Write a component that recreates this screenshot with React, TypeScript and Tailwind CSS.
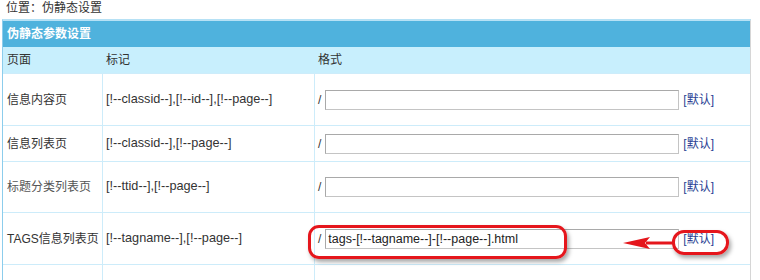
import React from "react";

type Row = {
  page: string;
  marks: string;
  value: string;
  height: string;
  muted?: boolean;
};

const rows: Row[] = [
  { page: "信息内容页", marks: "[!--classid--],[!--id--],[!--page--]", value: "", height: "h-[52px]" },
  { page: "信息列表页", marks: "[!--classid--],[!--page--]", value: "", height: "h-[36px]" },
  { page: "标题分类列表页", marks: "[!--ttid--],[!--page--]", value: "", height: "h-[51px]", muted: true },
  { page: "TAGS信息列表页", marks: "[!--tagname--],[!--page--]", value: "tags-[!--tagname--]-[!--page--].html", height: "h-[52px]" },
  { page: "", marks: "", value: "", height: "h-[20px]" },
];

function FormatCell({ value, empty }: { value: string; empty: boolean }) {
  if (empty) return <div />;
  return (
    <div className="flex items-center pl-[3px]">
      <span className="text-[#333]">/</span>
      <input
        readOnly
        value={value}
        className="ml-[4px] h-[20px] w-[354px] border border-[#c4c4c4] border-t-[#a9a9a9] border-l-[#a9a9a9] bg-white pl-[2px] text-[12.5px] text-[#222] outline-none"
      />
      <a className="ml-[4px] cursor-pointer text-[#2b3f94]">[默认]</a>
    </div>
  );
}

export default function App() {
  return (
    <div className="relative h-[280px] w-[760px] overflow-hidden bg-white font-['Liberation_Sans','Noto_Sans_CJK_SC',sans-serif] text-[12px] text-[#333]">
      <div className="h-[19px] pl-[6px] leading-[17px]">位置：伪静态设置</div>
      <div className="ml-[2px] w-[749px] border-t-[2px] border-r border-l border-t-[#b6e1f5] border-r-[#d6d6d6] border-l-[#8ccdec]">
        <div className="flex h-[26px] items-center bg-[#4fb2dd] pl-[4px] font-bold text-white">伪静态参数设置</div>
        <div className="grid h-[26px] grid-cols-[100px_212px_1fr] items-center bg-[#c8effd]">
          <div className="pl-[4px]">页面</div>
          <div className="pl-[3px]">标记</div>
          <div className="pl-[3px]">格式</div>
        </div>
        {rows.map((r, i) => (
          <div
            key={i}
            className={`grid grid-cols-[100px_212px_1fr] border-t border-[#cdecfa] ${r.height}`}
          >
            <div className={`flex items-center border-r border-[#cdecfa] pl-[4px] ${r.muted ? "text-[#555]" : ""}`}>
              {r.page}
            </div>
            <div className="flex items-center border-r border-[#cdecfa] pl-[3px] text-[12.7px]">{r.marks}</div>
            <FormatCell value={r.value} empty={!r.page} />
          </div>
        ))}
      </div>

      {/* red annotations */}
      <div className="absolute left-[308px] top-[225px] h-[34px] w-[259px] rounded-[11px] border-[3px] border-[#e5161c] shadow-[2px_3px_4px_rgba(0,0,0,0.35)]" />
      <div className="absolute left-[672px] top-[230px] h-[25px] w-[57px] rounded-[12px] border-[3px] border-[#e5161c] shadow-[2px_3px_4px_rgba(0,0,0,0.35)]" />
      <svg className="absolute left-[620px] top-[234px]" width="54" height="18" viewBox="0 0 54 18">
        <path d="M26 7.5 H53 V10.5 H26 Z" fill="#e5161c" />
        <path d="M3 9 L30 3 L25 9 L30 15 Z" fill="#e5161c" />
      </svg>
    </div>
  );
}
